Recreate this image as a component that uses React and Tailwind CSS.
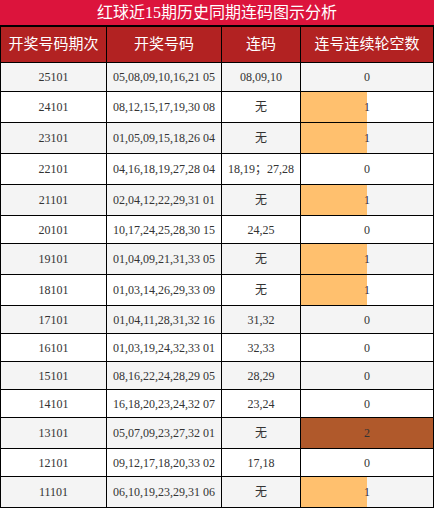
import React from 'react';

const rows = [
  { period: '25101', nums: '05,08,09,10,16,21 05', link: '08,09,10', gap: 0 },
  { period: '24101', nums: '08,12,15,17,19,30 08', link: '无', gap: 1 },
  { period: '23101', nums: '01,05,09,15,18,26 04', link: '无', gap: 1 },
  { period: '22101', nums: '04,16,18,19,27,28 04', link: '18,19；27,28', gap: 0 },
  { period: '21101', nums: '02,04,12,22,29,31 01', link: '无', gap: 1 },
  { period: '20101', nums: '10,17,24,25,28,30 15', link: '24,25', gap: 0 },
  { period: '19101', nums: '01,04,09,21,31,33 05', link: '无', gap: 1 },
  { period: '18101', nums: '01,03,14,26,29,33 09', link: '无', gap: 1 },
  { period: '17101', nums: '01,04,11,28,31,32 16', link: '31,32', gap: 0 },
  { period: '16101', nums: '01,03,19,24,32,33 01', link: '32,33', gap: 0 },
  { period: '15101', nums: '08,16,22,24,28,29 05', link: '28,29', gap: 0 },
  { period: '14101', nums: '16,18,20,23,24,32 07', link: '23,24', gap: 0 },
  { period: '13101', nums: '05,07,09,23,27,32 01', link: '无', gap: 2 },
  { period: '12101', nums: '09,12,17,18,20,33 02', link: '17,18', gap: 0 },
  { period: '11101', nums: '06,10,19,23,29,31 06', link: '无', gap: 1 },
];

const maxGap = 2;

const Cell = ({ children, className = '' }) => (
  <div className={`flex items-center justify-center border-r border-black ${className}`}>
    {children}
  </div>
);

const App = () => {
  return (
    <div className="w-[434px] h-[508px] bg-white font-['Liberation_Serif','Noto_Sans_CJK_SC',serif]">
      {/* title bar */}
      <div className="h-[26px] bg-[#dc143c] border-b border-black flex items-center justify-center text-white text-[16px] leading-none">
        红球近15期历史同期连码图示分析
      </div>

      {/* table header */}
      <div className="grid grid-cols-[106px_115px_79px_1fr] h-[37px] border-y border-l border-black bg-[#b22222] text-white text-[15px]">
        <Cell>开奖号码期次</Cell>
        <Cell>开奖号码</Cell>
        <Cell>连码</Cell>
        <Cell>连号连续轮空数</Cell>
      </div>

      {/* rows */}
      {rows.map((row, index) => {
        const tall = /[^\x00-\x7f]/.test(row.link);
        const height = index === 0 ? 'h-[29px]' : tall ? 'h-[31px]' : 'h-[28px]';
        const bg = index % 2 === 0 ? 'bg-[#f4f4f4]' : 'bg-white';
        const barColor = row.gap >= maxGap ? 'bg-[#b0592b]' : 'bg-[#ffc06e]';
        return (
          <div
            key={row.period}
            className={`grid grid-cols-[106px_115px_79px_1fr] border-b border-l border-black text-[12px] text-[#333] ${height} ${bg}`}
          >
            <Cell>{row.period}</Cell>
            <Cell>{row.nums}</Cell>
            <Cell>{row.link}</Cell>
            <Cell className="relative">
              {row.gap > 0 && (
                <div
                  className={`absolute left-0 top-0 bottom-0 ${barColor}`}
                  style={{ width: `${(row.gap / maxGap) * 100}%` }}
                />
              )}
              <span className="relative">{row.gap}</span>
            </Cell>
          </div>
        );
      })}
    </div>
  );
};

export default App;
